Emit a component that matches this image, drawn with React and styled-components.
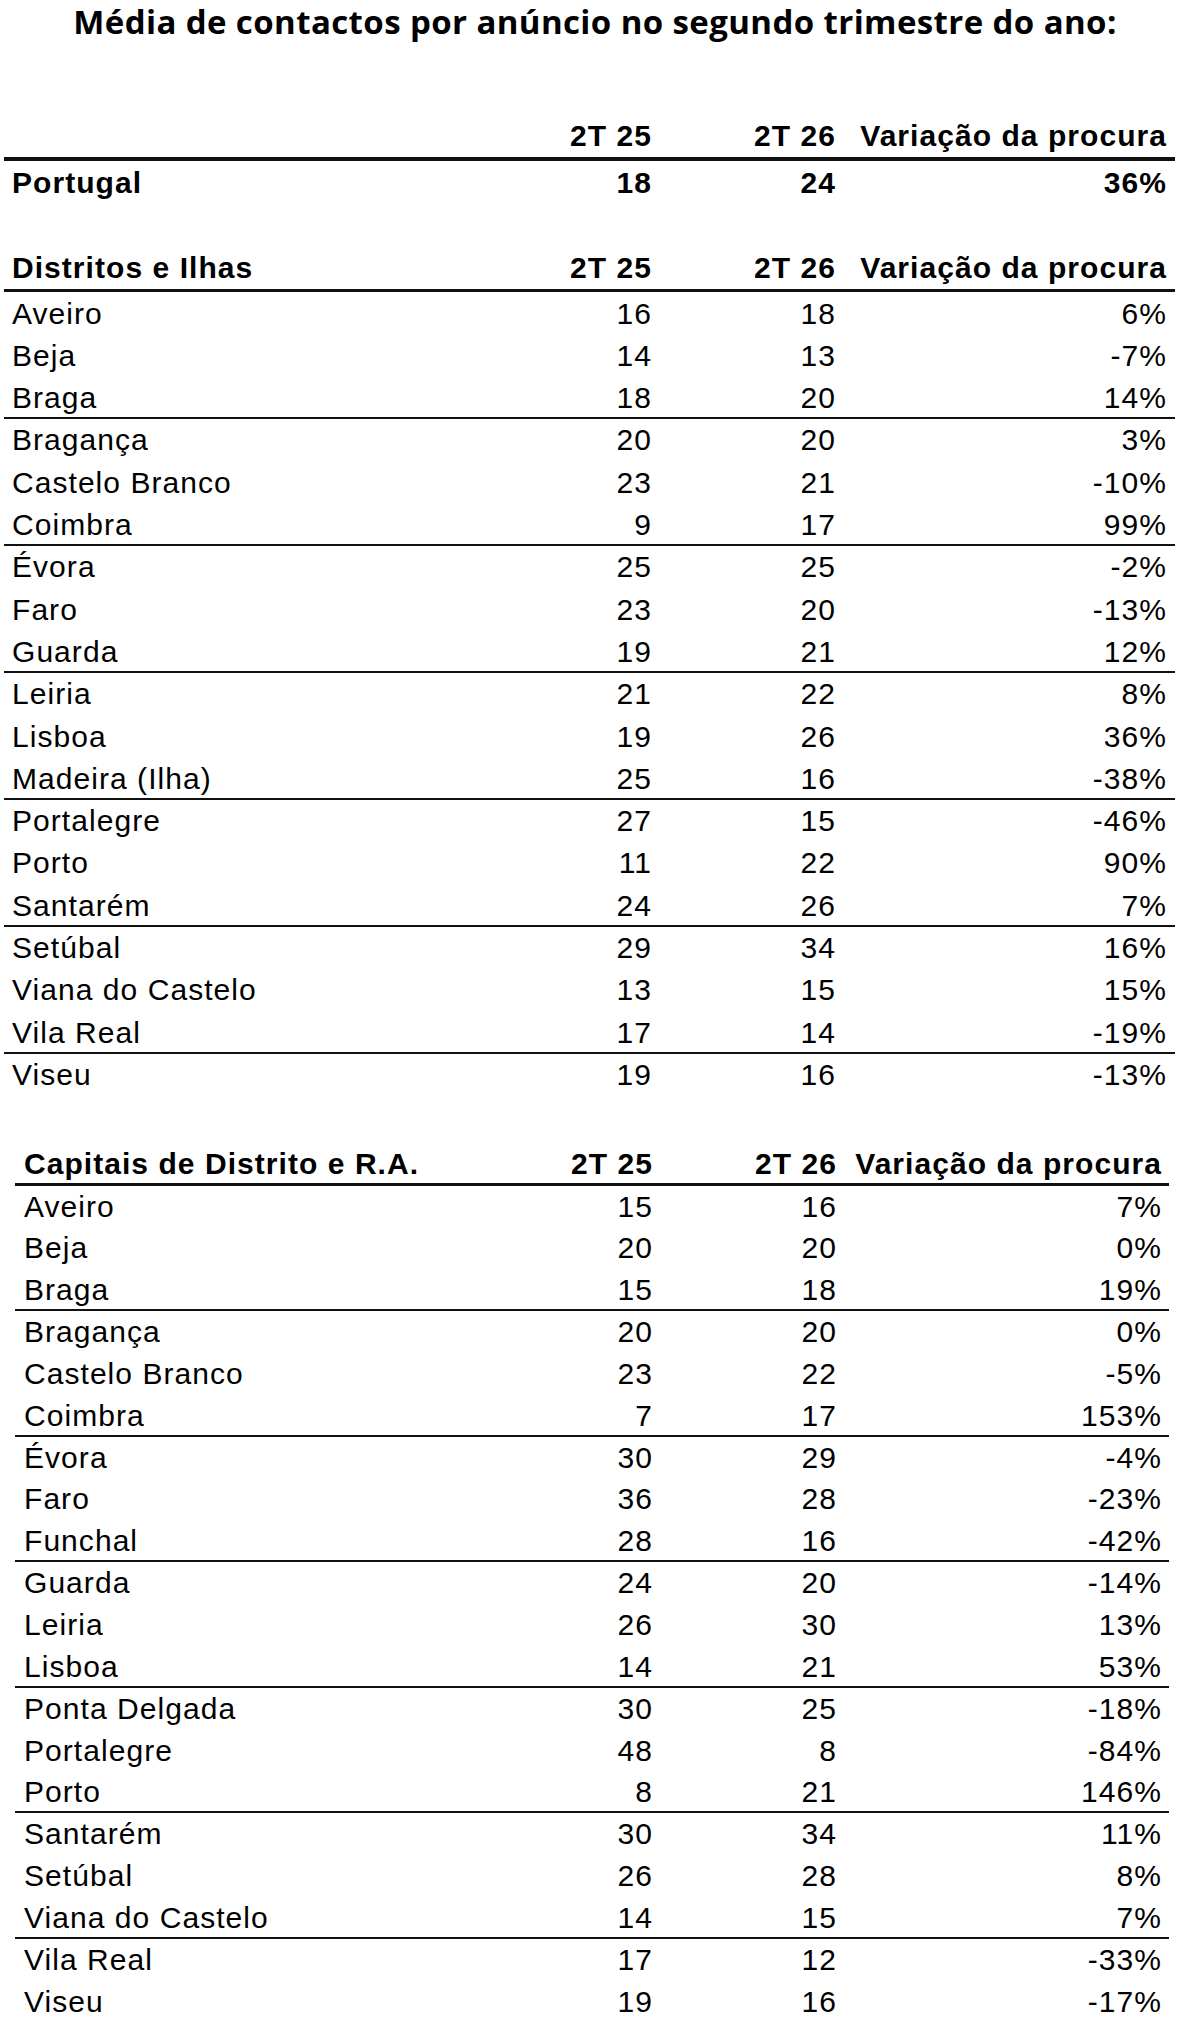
import React from "react";
import styled, { createGlobalStyle } from "styled-components";

const Global = createGlobalStyle`
  html, body { margin: 0; padding: 0; background: #fff; }
  body { font-family: "Liberation Sans", Arial, sans-serif; color: #000; }
`;

const Page = styled.main`
  width: 1190px;
  display: flex;
  flex-direction: column;
`;

const Title = styled.h1`
  margin: 0 0 76px 0;
  padding-top: 1px;
  font-family: "Open Sans", "Noto Sans", sans-serif;
  font-weight: 700;
  font-size: 33px;
  line-height: 42px;
  text-align: center;
  color: #000;
  letter-spacing: 0.4px;
  white-space: nowrap;
`;

const Table = styled.section`
  display: flex;
  flex-direction: column;
  margin: ${(p) => p.$top}px ${(p) => p.$right}px 0 ${(p) => p.$left}px;
  font-size: 30px;
  letter-spacing: 1.05px;
`;

const Row = styled.div`
  display: grid;
  grid-template-columns: ${(p) => p.$cols};
  align-items: end;
  box-sizing: border-box;
  height: ${(p) => p.$h}px;
  padding-bottom: ${(p) => p.$pb}px;
  border-bottom: ${(p) => p.$line}px solid #111;
  font-weight: ${(p) => (p.$bold ? 700 : 400)};
`;

const Name = styled.div`
  line-height: 34px;
  white-space: nowrap;
  padding-left: ${(p) => p.$pad}px;
`;

const Num = styled.div`
  line-height: 34px;
  white-space: nowrap;
  text-align: right;
  padding-right: ${(p) => p.$pad || 0}px;
`;

const distritos = [
  ["Aveiro", 16, 18, "6%"],
  ["Beja", 14, 13, "-7%"],
  ["Braga", 18, 20, "14%"],
  ["Bragança", 20, 20, "3%"],
  ["Castelo Branco", 23, 21, "-10%"],
  ["Coimbra", 9, 17, "99%"],
  ["Évora", 25, 25, "-2%"],
  ["Faro", 23, 20, "-13%"],
  ["Guarda", 19, 21, "12%"],
  ["Leiria", 21, 22, "8%"],
  ["Lisboa", 19, 26, "36%"],
  ["Madeira (Ilha)", 25, 16, "-38%"],
  ["Portalegre", 27, 15, "-46%"],
  ["Porto", 11, 22, "90%"],
  ["Santarém", 24, 26, "7%"],
  ["Setúbal", 29, 34, "16%"],
  ["Viana do Castelo", 13, 15, "15%"],
  ["Vila Real", 17, 14, "-19%"],
  ["Viseu", 19, 16, "-13%"],
];

const capitais = [
  ["Aveiro", 15, 16, "7%"],
  ["Beja", 20, 20, "0%"],
  ["Braga", 15, 18, "19%"],
  ["Bragança", 20, 20, "0%"],
  ["Castelo Branco", 23, 22, "-5%"],
  ["Coimbra", 7, 17, "153%"],
  ["Évora", 30, 29, "-4%"],
  ["Faro", 36, 28, "-23%"],
  ["Funchal", 28, 16, "-42%"],
  ["Guarda", 24, 20, "-14%"],
  ["Leiria", 26, 30, "13%"],
  ["Lisboa", 14, 21, "53%"],
  ["Ponta Delgada", 30, 25, "-18%"],
  ["Portalegre", 48, 8, "-84%"],
  ["Porto", 8, 21, "146%"],
  ["Santarém", 30, 34, "11%"],
  ["Setúbal", 26, 28, "8%"],
  ["Viana do Castelo", 14, 15, "7%"],
  ["Vila Real", 17, 12, "-33%"],
  ["Viseu", 19, 16, "-17%"],
];

const layoutA = { cols: "1fr 180px 184px 339px", padL: 8, padR: 8, left: 4, right: 15 };
const layoutB = { cols: "1fr 180px 184px 332px", padL: 9, padR: 7, left: 15, right: 21 };

function Line({ layout, h, line = 0, pb = 4, bold, cells }) {
  const [a, b, c, d] = cells;
  return (
    <Row $cols={layout.cols} $h={h} $line={line} $pb={pb} $bold={bold}>
      <Name $pad={layout.padL}>{a}</Name>
      <Num>{b}</Num>
      <Num>{c}</Num>
      <Num $pad={layout.padR}>{d}</Num>
    </Row>
  );
}

function Section({ layout, top, h, title, headerLine, headerPb = 4, rows }) {
  return (
    <Table $top={top} $left={layout.left} $right={layout.right}>
      <Line
        layout={layout}
        h={h}
        line={headerLine}
        pb={headerPb}
        bold
        cells={[title, "2T 25", "2T 26", "Variação da procura"]}
      />
      {rows.map((r, i) => {
        const grouped = (i + 1) % 3 === 0 && i !== rows.length - 1;
        return (
          <Line
            key={r[0] + i}
            layout={layout}
            h={h}
            line={grouped ? 2 : 0}
            pb={grouped ? 2 : 4}
            cells={r}
          />
        );
      })}
    </Table>
  );
}

export default function App() {
  return (
    <Page>
      <Global />
      <Title>Média de contactos por anúncio no segundo trimestre do ano:</Title>
      <Table $top={0} $left={layoutA.left} $right={layoutA.right}>
        <Line
          layout={layoutA}
          h={42.3}
          line={4}
          bold
          cells={["", "2T 25", "2T 26", "Variação da procura"]}
        />
        <Line layout={layoutA} h={42.3} bold cells={["Portugal", 18, 24, "36%"]} />
      </Table>
      <Section
        layout={layoutA}
        top={46.4}
        h={42.3}
        title="Distritos e Ilhas"
        headerLine={3}
        rows={distritos}
      />
      <Section
        layout={layoutB}
        top={47.95}
        h={41.85}
        title="Capitais de Distrito e R.A."
        headerLine={3}
        headerPb={2}
        rows={capitais}
      />
    </Page>
  );
}
